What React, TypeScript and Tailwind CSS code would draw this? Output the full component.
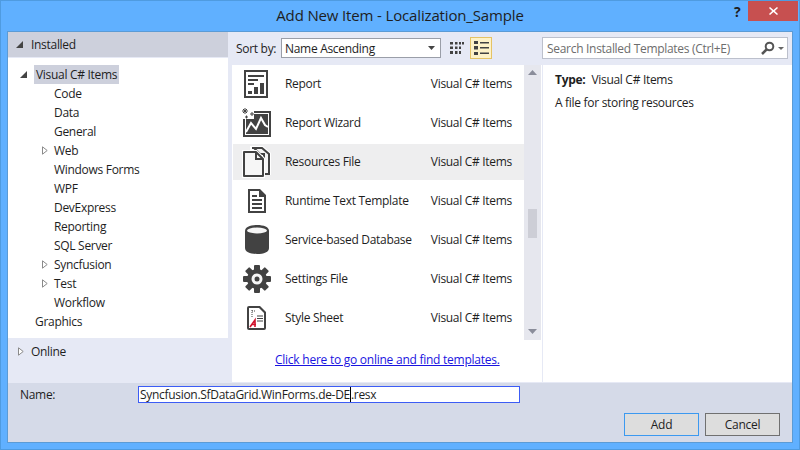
import React from "react";

const font = { fontFamily: '"Open Sans", "Noto Sans", sans-serif' };

const Expanded = () => (
  <svg width="7" height="7" viewBox="0 0 7 7" className="shrink-0"><path d="M7 0V7H0Z" fill="#444" /></svg>
);
const Collapsed = ({ c = "#8a8a8a" }: { c?: string }) => (
  <svg width="6" height="9" viewBox="0 0 6 9" className="shrink-0"><path d="M.5.8 5.200 4.500.5 8.200Z" fill="#fff" stroke={c} /></svg>
);

const ReportIcon = () => (
  <svg width="28" height="28" viewBox="0 0 28 28">
    <path fill="#424242" fillRule="evenodd" d="M1 0h24v28H1ZM3 2v24h20V2Z" />
    <path fill="#424242" d="M5 5h16v2H5ZM5 9h10v2H5ZM5 13h6v2H5ZM5 21h4v3H5ZM11 17h4v7h-4ZM17 13h4v11h-4Z" />
  </svg>
);
const WizardIcon = () => (
  <svg width="30" height="30" viewBox="0 0 30 30">
    <path fill="#424242" d="M1 3h28v26H1Z" />
    <path fill="#fff" d="M3 5h24v22H3Z" />
    <path fill="#424242" d="M4 6h22v20H4Z" />
    <path fill="none" stroke="#fff" strokeWidth="2" d="M4 24 9 15l5 6 5-11 4 7 3 2" />
    <path fill="#fff" d="M0 0h12v11H0Z" />
    <path stroke="#424242" strokeWidth="1" d="M0 3h6M3 0v6M1 1l4 4M5 1 1 5M8 6h4M10 4v4M3 9h3M4.500 7.500v3" />
  </svg>
);
const FilesIcon = () => (
  <svg width="30" height="32" viewBox="0 0 30 32">
    <path fill="#fff" d="M8 0h13l8 7v22H8Z" />
    <path fill="#f6f6f6" stroke="#424242" strokeWidth="2" d="M10 2h10l7 6v20h-5V8h-4l-6-6Z" />
    <path fill="#fff" d="M0 4h15l8 8v20H0Z" />
    <path fill="#f6f6f6" stroke="#424242" strokeWidth="2" strokeLinejoin="round" d="M2 6h12l7 7v17H2Z" />
    <path fill="#424242" d="M13 6h2v6h6v2h-8Z" />
  </svg>
);
const DocIcon = () => (
  <svg width="20" height="24" viewBox="0 0 20 24">
    <path fill="#424242" fillRule="evenodd" d="M1 0h12l6 6v18H1ZM3 2v20h14V8h-5V2Z" />
    <path fill="#424242" d="M5 6h5v2H5ZM5 10h10v2H5ZM5 14h10v2H5ZM5 18h10v2H5Z" />
  </svg>
);
const DbIcon = () => (
  <svg width="26" height="29" viewBox="0 0 26 29">
    <path fill="#424242" d="M1 6C1 2 6 0 13 0s12 2 12 6v17c0 4-5 6-12 6S1 27 1 23Z" />
    <ellipse cx="13" cy="5.500" rx="10" ry="3" fill="#f6f6f6" />
  </svg>
);
const GearIcon = () => (
  <svg width="28" height="28" viewBox="0 0 28 28">
    <g fill="#424242">
      {[0, 45, 90, 135].map((a) => (
        <rect key={a} x="11" y="0" width="6" height="28" rx="1" transform={`rotate(${a} 14 14)`} />
      ))}
    </g>
    <circle cx="14" cy="14" r="10" fill="#424242" />
    <circle cx="14" cy="14" r="5.500" fill="#f6f6f6" />
    <circle cx="14" cy="14" r="2.500" fill="#424242" />
  </svg>
);
const SheetIcon = () => (
  <svg width="20" height="24" viewBox="0 0 20 24">
    <path fill="#424242" d="M2 0h11l6 6v16a2 2 0 0 1-2 2H2a2 2 0 0 1-2-2V2a2 2 0 0 1 2-2Z" />
    <path fill="#fff" d="M2 2h10l5 5v15H2Z" />
    <path stroke="#424242" strokeDasharray="1 1" d="M5 4v8M5 5h3" />
    <path stroke="#424242" strokeWidth="1.200" d="M10 10h6M10 12.500h6M10 15h6" />
    <path fill="none" stroke="#d0132d" strokeWidth="1.600" d="M3 21 8 14v7M5 18.500h4" />
  </svg>
);

const items = [
  { n: "Report", i: <ReportIcon /> },
  { n: "Report Wizard", i: <WizardIcon /> },
  { n: "Resources File", i: <FilesIcon />, sel: true },
  { n: "Runtime Text Template", i: <DocIcon /> },
  { n: "Service-based Database", i: <DbIcon /> },
  { n: "Settings File", i: <GearIcon /> },
  { n: "Style Sheet", i: <SheetIcon /> },
];

const children: [string, boolean][] = [
  ["Code", false], ["Data", false], ["General", false], ["Web", true], ["Windows Forms", false],
  ["WPF", false], ["DevExpress", false], ["Reporting", false], ["SQL Server", false],
  ["Syncfusion", true], ["Test", true], ["Workflow", false],
];

export default function App() {
  return (
    <div style={font} className="w-[800px] h-[450px] overflow-hidden flex flex-col bg-[#60b0ff] border border-[#4f9be0] text-[12px] leading-[19px] text-[#1e1e1e] tracking-[-0.3px]">
      <div className="h-[30px] shrink-0 flex items-start relative">
        <div className="flex-1 text-center text-[15px] leading-[18px] pt-[5px] tracking-[-0.15px]">Add New Item - Localization_Sample</div>
        <span className="absolute left-[733px] top-[1px] font-bold text-[14px] leading-[20px]">?</span>
        <div className="absolute left-[747px] top-0 w-[50px] h-[20px] bg-[#c75050] flex items-center justify-center">
          <svg width="9" height="8" viewBox="0 0 9 8"><path d="M1 0 4.500 3 8 0l1 1-3.200 3L9 7 8 8 4.500 5 1 8 0 7l3.200-3L0 1Z" fill="#fff" /></svg>
        </div>
      </div>
      <div className="mx-[6px] flex-1 border border-[#5b9bd5] flex flex-col bg-[#e6e9f5] min-h-0">
        <div className="flex h-[350px] shrink-0">
          <div className="w-[220px] shrink-0 flex flex-col">
            <div className="h-[25px] bg-[#cdd0dc] flex items-center pl-[8px] gap-[8px]">
              <Expanded /><span>Installed</span>
            </div>
            <div className="h-[280px] mt-[1px] bg-white pt-[7px] relative">
              <div className="flex items-center h-[19px] pl-[12px]">
                <Expanded />
                <span className="ml-[7px] bg-[#cdd0dc] px-[2px] h-[19px]">Visual C# Items</span>
              </div>
              {children.map(([t, c]) => (
                <div key={t} className="flex items-center h-[19px] pl-[46px] relative">
                  {c && <span className="absolute left-[34px] top-[5px] flex"><Collapsed /></span>}
                  <span>{t}</span>
                </div>
              ))}
              <div className="flex items-center h-[19px] pl-[27px]">Graphics</div>
            </div>
            <div className="flex items-center h-[26px] pl-[10px] gap-[7px]">
              <Collapsed /><span>Online</span>
            </div>
          </div>
          <div className="flex-1 flex flex-col min-w-0 ml-[4px]">
            <div className="h-[33px] shrink-0 flex items-start pt-[5px]">
              <div className="w-[310px] h-[22px] flex items-center shrink-0 gap-[4px] pl-[4px]">
                <span className="w-[41px] leading-[19px]">Sort by:</span>
                <div className="w-[160px] h-[20px] bg-white border border-[#9a9ea8] flex items-center justify-between pl-[3px] pr-[5px]">
                  <span>Name Ascending</span>
                  <svg width="7" height="4" viewBox="0 0 7 4"><path d="M0 0h7L3.500 4Z" fill="#444" /></svg>
                </div>
                <svg width="14" height="14" viewBox="0 0 14 14" className="ml-[5px]" fill="#424242">
                  <path d="M0 1h3v2.500H0ZM5 1h2.500v2.500H5ZM9 1h2v2.500H9ZM12 1h2v2.500h-2ZM0 5.500h3V8H0ZM5 5.500h2.500V8H5ZM9 5.500h2V8H9ZM0 10h3v3H0ZM5 10h2.500v3H5ZM9 10h2v3H9Z" />
                </svg>
                <div className="w-[22px] h-[22px] ml-[2px] bg-[#fdf2c8] border border-[#e5c365] flex items-center justify-center">
                  <svg width="15" height="14" viewBox="0 0 15 14" fill="#424242"><path d="M0 0h4v3H0ZM0 5h4v3.500H0ZM0 11h4v3H0ZM6 1h9v1.500H6ZM6 6h9v1.500H6ZM6 11.500h9V13H6Z" /></svg>
                </div>
              </div>
              <div className="w-[246px] h-[22px] bg-white border border-[#bcc0cc] flex items-center pl-[4px] pr-[3px] text-[#6d6d6d]">
                <span className="flex-1">Search Installed Templates (Ctrl+E)</span>
                <svg width="14" height="14" viewBox="0 0 14 14" fill="none" stroke="#555" strokeWidth="2">
                  <circle cx="8.500" cy="5.500" r="3.800" />
                  <path d="M5.500 8.500 1 13" strokeWidth="2.500" />
                </svg>
                <svg width="6" height="3" viewBox="0 0 6 3" className="ml-[3px]"><path d="M0 0h6L3 3Z" fill="#666" /></svg>
              </div>
            </div>
            <div className="flex flex-1 min-h-0">
              <div className="w-[310px] shrink-0 bg-white flex flex-col">
                <div className="flex h-[275px] shrink-0">
                  <div className="w-[292px] pl-[1px] shrink-0 flex flex-col -mt-[1px]">
                    {items.map((it) => (
                      <div key={it.n} className="h-[39px] shrink-0 flex items-center">
                        <div className={`w-full h-[36px] flex items-center pr-[12px] ${it.sel ? "bg-[#eeeeef]" : ""}`}>
                          <div className="w-[52px] h-[30px] shrink-0 flex items-center justify-center pr-[5px]">{it.i}</div>
                          <span className="flex-1">{it.n}</span>
                          <span>Visual C# Items</span>
                        </div>
                      </div>
                    ))}
                  </div>
                  <div className="w-[17px] shrink-0 bg-[#e6e7ee] flex flex-col items-center pt-[5px] pb-[6px]">
                    <svg width="9" height="5" viewBox="0 0 9 5"><path d="M0 5h9L4.500 0Z" fill="#8a8d9a" /></svg>
                    <div className="w-[9px] h-[29px] bg-[#cdced6] mt-[134px]" />
                    <div className="flex-1" />
                    <svg width="9" height="5" viewBox="0 0 9 5"><path d="M0 0h9L4.500 5Z" fill="#8a8d9a" /></svg>
                  </div>
                </div>
                <div className="flex-1 pl-[43px] pt-[10px]">
                  <a className="text-[#1a14e0] underline tracking-[-0.25px]">Click here to go online and find templates.</a>
                </div>
              </div>
              <div className="w-px bg-[#e6e9f5] shrink-0" />
              <div className="flex-1 bg-white pl-[12px] pt-[5px]">
                <div className="flex gap-[6px] h-[19px]"><span className="font-bold">Type:</span><span>Visual C# Items</span></div>
                <div className="mt-[4px]">A file for storing resources</div>
              </div>
            </div>
          </div>
        </div>
        <div className="flex-1 mt-[1px] bg-[#d5dae8] flex flex-col px-[12px] pt-[3px]">
          <div className="flex items-center h-[17px]">
            <span className="w-[118px]">Name:</span>
            <div className="w-[382px] h-[17px] bg-white border border-[#3c5cf5] flex items-center pl-[1px]">
              <span className="leading-[15px]">Syncfusion.SfDataGrid.WinForms.de-DE</span>
              <span className="w-px h-[15px] bg-black" />
              <span className="leading-[15px]">.resx</span>
            </div>
          </div>
          <div className="flex justify-end gap-[6px] mt-[10px]">
            <button className="w-[75px] h-[23px] bg-[#dddddd] border border-[#3c99f0]">Add</button>
            <button className="w-[75px] h-[23px] bg-[#dddddd] border border-[#707070]">Cancel</button>
          </div>
        </div>
      </div>
      <div className="h-[6px] shrink-0" />
    </div>
  );
}
